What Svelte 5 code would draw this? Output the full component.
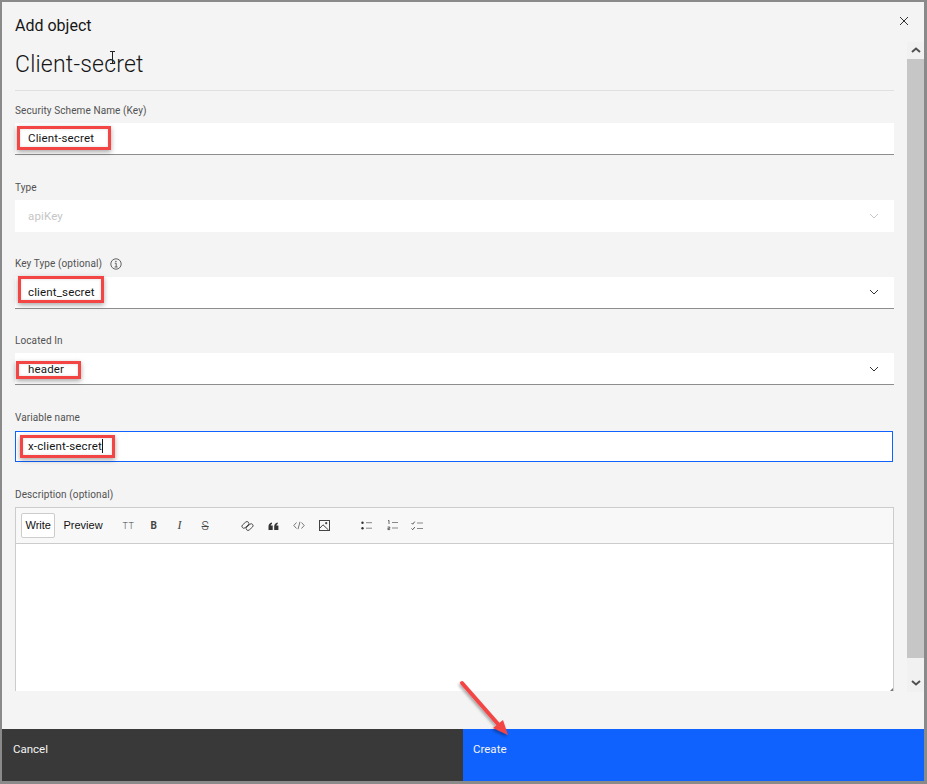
<script>
  // form rows, top to bottom
  const fields = [
    { label: 'Security Scheme Name (Key)', value: 'Client-secret' },
    { label: 'Type', value: 'apiKey', select: true, disabled: true },
    { label: 'Key Type (optional)', value: 'client_secret', select: true, info: true },
    { label: 'Located In', value: 'header', select: true },
    { label: 'Variable name', value: 'x-client-secret', focused: true }
  ];

  // red annotation boxes pasted over the screenshot
  const marks = [
    { x: 17, y: 126, w: 94, h: 24 },
    { x: 18, y: 276, w: 86, h: 27 },
    { x: 16, y: 361, w: 65, h: 18 },
    { x: 20, y: 435, w: 95, h: 23 }
  ];
</script>

<div class="page">
  <div class="modal">
    <header class="top">
      <h2>Add object</h2>
      <button class="close" aria-label="Close">
        <svg width="10" height="10" viewBox="0 0 10 10"><path d="M1 1l8 8M9 1l-8 8" stroke="#333" stroke-width="1" fill="none" /></svg>
      </button>
    </header>

    <div class="body">
      <div class="content">
        <h1>Client-secret</h1>
        <hr />

        {#each fields as f}
          <div class="field">
            <div class="label">
              {f.label}
              {#if f.info}
                <svg class="info" width="12" height="12" viewBox="0 0 12 12">
                  <circle cx="6" cy="6" r="5.2" fill="none" stroke="#525252" stroke-width="0.9" />
                  <path d="M4.8 5.2H6.2V9M4.6 9H7.6" fill="none" stroke="#525252" stroke-width="0.9" />
                  <circle cx="5.9" cy="3.4" r="0.7" fill="#525252" />
                </svg>
              {/if}
            </div>
            <div class="control" class:focused={f.focused} class:disabled={f.disabled}>
              <span class="value">{f.value}</span>
              {#if f.focused}<span class="caret"></span>{/if}
              {#if f.select}
                <svg class="chev" width="10" height="6" viewBox="0 0 10 6">
                  <path d="M1 1l4 4 4-4" fill="none" stroke={f.disabled ? '#c6c6c6' : '#333'} stroke-width="1" />
                </svg>
              {/if}
            </div>
          </div>
        {/each}

        <div class="field editor-field">
          <div class="label">Description (optional)</div>
          <div class="editor">
            <div class="toolbar">
              <span class="tab active">Write</span>
              <span class="tab">Preview</span>

              <div class="tools first">
                <span class="tool tt">TT</span>
                <span class="tool bold">B</span>
                <span class="tool ital">I</span>
                <span class="tool strike">S</span>
              </div>

              <div class="tools second">
                <svg class="tool" width="13" height="12" viewBox="0 0 13 12">
                  <rect x="0.4" y="3" width="8" height="3.8" rx="1.9" transform="rotate(-42 4.4 4.9)" fill="none" stroke="#444" stroke-width="0.9" />
                  <rect x="4.6" y="5.2" width="8" height="3.8" rx="1.9" transform="rotate(-42 8.6 7.1)" fill="none" stroke="#444" stroke-width="0.9" />
                </svg>
                <svg class="tool" width="11" height="8" viewBox="0 0 11 8">
                  <path d="M0.5 8V4.5C0.5 2.5 1.6 1 4 0.5V2C3.2 2.3 2.8 2.7 2.7 3.5H4.7V8ZM6.2 8V4.5C6.2 2.5 7.3 1 9.7 0.5V2C8.9 2.3 8.5 2.7 8.4 3.5H10.4V8Z" fill="#333" />
                </svg>
                <svg class="tool" width="12" height="9" viewBox="0 0 12 9">
                  <path d="M3.5 1.5L0.8 4.5l2.7 3M8.5 1.5l2.7 3-2.7 3M7 0.8L5 8.2" fill="none" stroke="#555" stroke-width="0.8" />
                </svg>
                <svg class="tool" width="11" height="11" viewBox="0 0 11 11">
                  <rect x="0.5" y="0.5" width="10" height="10" fill="none" stroke="#444" />
                  <circle cx="7.2" cy="3.2" r="1.1" fill="#444" />
                  <path d="M1 8l3-3.2L9.5 10" fill="none" stroke="#444" />
                </svg>
              </div>

              <div class="tools third">
                <svg class="tool" width="11" height="9" viewBox="0 0 11 9">
                  <circle cx="1.5" cy="1.7" r="1.2" fill="#333" /><circle cx="1.5" cy="7.2" r="1.2" fill="#333" />
                  <path d="M5 1.7h6M5 7.2h6" stroke="#888" />
                </svg>
                <svg class="tool" width="11" height="11" viewBox="0 0 11 11">
                  <path d="M1 0.8l1-.4V4M0.6 7h2.2v1.3H0.9v1.3h2.2" fill="none" stroke="#444" stroke-width="0.8" />
                  <path d="M5 2.5h6M5 8h6" stroke="#888" />
                </svg>
                <svg class="tool check" width="12" height="10" viewBox="0 0 12 10">
                  <path d="M0.5 2l1.2 1.2L3.8 0.6M0.5 7.5l1.2 1.2 2.1-2.6" fill="none" stroke="#444" stroke-width="0.9" />
                  <path d="M6 2h6M6 7.5h6" stroke="#888" />
                </svg>
              </div>
            </div>
            <div class="textarea"><span class="grip"></span></div>
          </div>
        </div>
      </div>

      <div class="scrollbar">
        <svg class="arrow" width="10" height="6" viewBox="0 0 10 6"><path d="M1 5l4-3.5L9 5" fill="none" stroke="#505050" stroke-width="2" /></svg>
        <div class="thumb"></div>
        <svg class="arrow down" width="10" height="6" viewBox="0 0 10 6"><path d="M1 1l4 3.5L9 1" fill="none" stroke="#505050" stroke-width="2" /></svg>
      </div>
    </div>

    <footer class="actions">
      <button class="cancel">Cancel</button>
      <button class="create">Create</button>
    </footer>
  </div>

  <!-- annotations on top of the screenshot -->
  {#each marks as m}
    <div class="mark" style="left:{m.x}px;top:{m.y}px;width:{m.w}px;height:{m.h}px"></div>
  {/each}

  <svg class="pointer" width="70" height="70" viewBox="0 0 70 70">
    <defs>
      <filter id="soft" x="-30%" y="-30%" width="160%" height="160%">
        <feDropShadow dx="-1" dy="2" stdDeviation="1.5" flood-color="#000" flood-opacity="0.35" />
      </filter>
    </defs>
    <g filter="url(#soft)">
      <path d="M14 14L50 55" stroke="#f44545" stroke-width="4" stroke-linecap="round" />
      <path d="M45 59L55 51 60 66Z" fill="#f44545" />
    </g>
  </svg>

  <svg class="ibeam" width="7" height="13" viewBox="0 0 7 13">
    <path d="M1 0.5h5M1 12.5h5M3.5 0.5v12" stroke="#222" fill="none" />
  </svg>
</div>

<style>
  :global(body) {
    margin: 0;
  }

  .page {
    position: relative;
    width: 927px;
    height: 784px;
    box-sizing: border-box;
    padding: 2px 3px 3px 2px;
    background: #8a8a8a;
    font-family: Roboto, 'Open Sans', sans-serif;
    color: #161616;
    overflow: hidden;
  }

  .modal {
    display: flex;
    flex-direction: column;
    height: 100%;
    background: #f4f4f4;
  }

  .top {
    display: flex;
    justify-content: space-between;
    align-items: flex-start;
    height: 40px;
    flex: none;
    padding-left: 13px;
    box-sizing: border-box;
  }

  .top h2 {
    margin: 15px 0 0;
    font-size: 16px;
    line-height: 18px;
    font-weight: 400;
  }

  .close {
    width: 10px;
    height: 10px;
    margin: 14px 15px 0 0;
    padding: 0;
    border: 0;
    background: none;
    display: flex;
  }

  .body {
    flex: none;
    height: 650px;
    display: flex;
    overflow: hidden;
  }

  .content {
    flex: 1;
    padding: 0 13px;
    min-width: 0;
  }

  h1 {
    margin: 9px 0 0;
    font-size: 23px;
    line-height: 28px;
    font-weight: 300;
    letter-spacing: 0.2px;
  }

  hr {
    margin: 11px 0 13px;
    border: 0;
    border-top: 1px solid #e0e0e0;
  }

  .field {
    margin-bottom: 26px;
  }

  /* rows don't sit on an even pitch in the shot */
  .field:nth-child(4),
  .field:nth-child(5) {
    margin-bottom: 25px;
  }

  .label {
    display: flex;
    align-items: center;
    gap: 8px;
    height: 14px;
    margin-bottom: 5px;
    font-size: 10px;
    line-height: 14px;
    color: #525252;
    letter-spacing: 0.1px;
  }

  .field:nth-child(5) .label,
  .field:nth-child(7) .label {
    margin-bottom: 6px;
  }

  .control {
    display: flex;
    align-items: center;
    height: 32px;
    box-sizing: border-box;
    padding: 0 15px 2px 13px;
    background: #fff;
    border-bottom: 1px solid #8d8d8d;
    font-size: 11.5px;
    letter-spacing: 0.15px;
  }

  .control.disabled {
    border-bottom: 0;
    padding-bottom: 0;
    color: #c6c6c6;
  }

  .field:nth-child(6) .control {
    padding-bottom: 0;
  }

  .control.focused {
    height: 31px;
    border: 1px solid #0f62fe;
    margin-right: 1px;
    padding-left: 12px;
  }

  .caret {
    width: 1px;
    height: 14px;
    background: #161616;
  }

  .chev {
    margin-left: auto;
  }

  .editor {
    border: 1px solid #ccc;
    border-bottom: 0;
  }

  .toolbar {
    display: flex;
    align-items: center;
    height: 36px;
    box-sizing: border-box;
    padding-left: 5px;
    background: #f8f8f8;
    border-bottom: 1px solid #ccc;
  }

  .tab {
    font-family: 'Liberation Sans', Arial, sans-serif;
    font-size: 11px;
    line-height: 23px;
    padding: 0 3px;
    color: #111;
    border: 1px solid transparent;
  }

  .tab.active {
    background: #fff;
    border-color: #ccc;
    border-radius: 2px;
    margin-right: 4px;
    padding: 0 3.5px;
  }

  .tools {
    display: flex;
    align-items: center;
  }

  .first {
    margin-left: 16px;
    gap: 16px;
  }

  .second {
    margin-left: 30px;
    gap: 14px;
  }

  .third {
    margin-left: 31px;
    gap: 15px;
  }

  .tool {
    display: block;
    flex: none;
    color: #444;
  }

  .tt {
    font-size: 9px;
    letter-spacing: 0.5px;
    width: 12px;
    font-weight: 300;
  }

  .bold {
    font-size: 10px;
    font-weight: 700;
    width: 9px;
  }

  .ital {
    margin-left: 2px;
    font-family: 'Liberation Serif', serif;
    font-size: 12px;
    font-style: italic;
    width: 8px;
  }

  .strike {
    font-size: 12px;
    font-weight: 300;
    text-decoration: line-through;
    width: 9px;
  }

  .check {
    margin-left: -2px;
  }

  .textarea {
    position: relative;
    height: 147px;
    background: #fff;
  }

  .grip {
    position: absolute;
    right: 0;
    bottom: 0;
    width: 0;
    height: 0;
    border-left: 3px solid transparent;
    border-bottom: 3px solid #777;
  }

  .scrollbar {
    flex: none;
    width: 17px;
    display: flex;
    flex-direction: column;
    align-items: center;
    background: #f1f1f1;
  }

  .arrow {
    flex: none;
    margin: 5px 0 6px;
  }

  .arrow.down {
    margin: auto 0 6px;
  }

  .thumb {
    flex: none;
    height: 599px;
    align-self: stretch;
    background: #c6c6c6;
  }

  .actions {
    flex: none;
    height: 52px;
    margin-top: auto;
    display: grid;
    grid-template-columns: 1fr 1fr;
  }

  .actions button {
    border: 0;
    padding: 0 0 12px 11px;
    text-align: left;
    font-family: inherit;
    font-size: 11.5px;
    color: #f4f4f4;
  }

  .actions .create {
    padding-left: 10px;
  }

  .cancel {
    background: #393939;
  }

  .create {
    background: #0f62fe;
  }

  .mark {
    position: absolute;
    box-sizing: border-box;
    border: 3px solid #f44545;
    box-shadow: 0 2px 5px rgba(0, 0, 0, 0.35), inset 0 0 3px rgba(0, 0, 0, 0.15);
  }

  .pointer {
    position: absolute;
    left: 448px;
    top: 669px;
  }

  .ibeam {
    position: absolute;
    left: 109px;
    top: 51px;
  }
</style>
